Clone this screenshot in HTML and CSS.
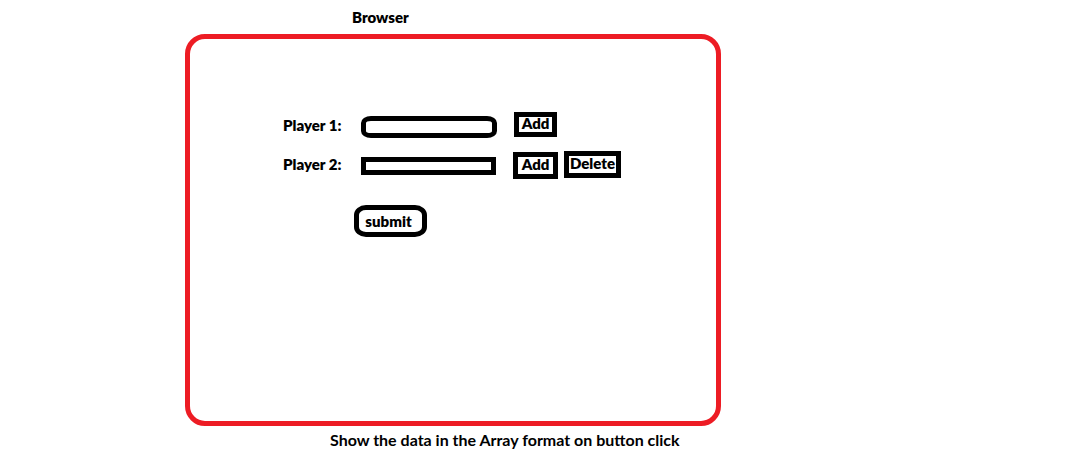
FILE: index.html
```html
<!DOCTYPE html>
<html lang="en">
<head>
<meta charset="utf-8">
<title>Browser</title>
<link rel="stylesheet" href="styles.css">
</head>
<body>
<main class="page">
  <h1 class="title">Browser</h1>
  <form class="frame">
    <div class="row">
      <label class="label" for="player1">Player 1:</label>
      <input class="field field-round" id="player1" type="text">
      <div class="actions">
        <button class="btn btn-first" type="button">Add</button>
      </div>
    </div>
    <div class="row">
      <label class="label" for="player2">Player 2:</label>
      <input class="field" id="player2" type="text">
      <div class="actions">
        <button class="btn btn-add" type="button">Add</button>
        <button class="btn btn-delete" type="button">Delete</button>
      </div>
    </div>
    <button class="submit" type="submit">submit</button>
  </form>
  <p class="caption">Show the data in the Array format on button click</p>
</main>
</body>
</html>
```

FILE: styles.css
```css
* {
  box-sizing: border-box;
}

body {
  margin: 0;
  background: #fff;
  color: #000;
  font: 800 15px/18px Lato, sans-serif;
}

.page {
  display: flex;
  flex-direction: column;
  padding: 8px 0 0 185px;
}

.title {
  margin: 0 0 8px;
  padding-left: 167px;
  font-size: 15px;
  font-weight: 800;
  line-height: 18px;
}

.frame {
  display: flex;
  flex-direction: column;
  align-items: flex-start;
  gap: 11px;
  width: 536px;
  max-width: 100%;
  min-height: 392px;
  padding: 73px 0 0 93px;
  border: 5px solid #ed1c24;
  border-radius: 20px;
}

.row {
  display: grid;
  grid-template-columns: 78px 136px auto;
  align-items: center;
  min-height: 28px;
}

.label {
  padding-bottom: 2px;
}

.field {
  width: 135px;
  height: 18px;
  margin: 2px 0 0;
  padding: 0 4px;
  border: 5px solid #000;
  border-radius: 0;
  background: #fff;
  font: inherit;
  font-size: 8px;
  line-height: 8px;
}

.field-round {
  width: 136px;
  height: 22px;
  border-radius: 10px / 7px;
}

.actions {
  display: flex;
  align-items: flex-start;
  align-self: start;
  gap: 6px;
  padding-left: 16px;
}

.btn,
.submit {
  display: flex;
  align-items: center;
  justify-content: center;
  padding: 0;
  border: 5px solid #000;
  background: #fff;
  color: inherit;
  font: inherit;
}

.btn {
  height: 27px;
  padding-bottom: 2px;
  line-height: 15px;
}

.btn-first {
  width: 43px;
  height: 25px;
  margin-left: 1px;
  padding-bottom: 3px;
  line-height: 12px;
}

.btn-add {
  width: 45px;
  margin-top: 1px;
}

.btn-delete {
  width: 57px;
}

.submit {
  width: 73px;
  height: 32px;
  margin: 15px 0 0 71px;
  padding: 0 4px 0 0;
  border-radius: 12px / 10px;
}

.caption {
  margin: 5px 0 0;
  padding-left: 145px;
  font-size: 16px;
  font-weight: 700;
}
```
